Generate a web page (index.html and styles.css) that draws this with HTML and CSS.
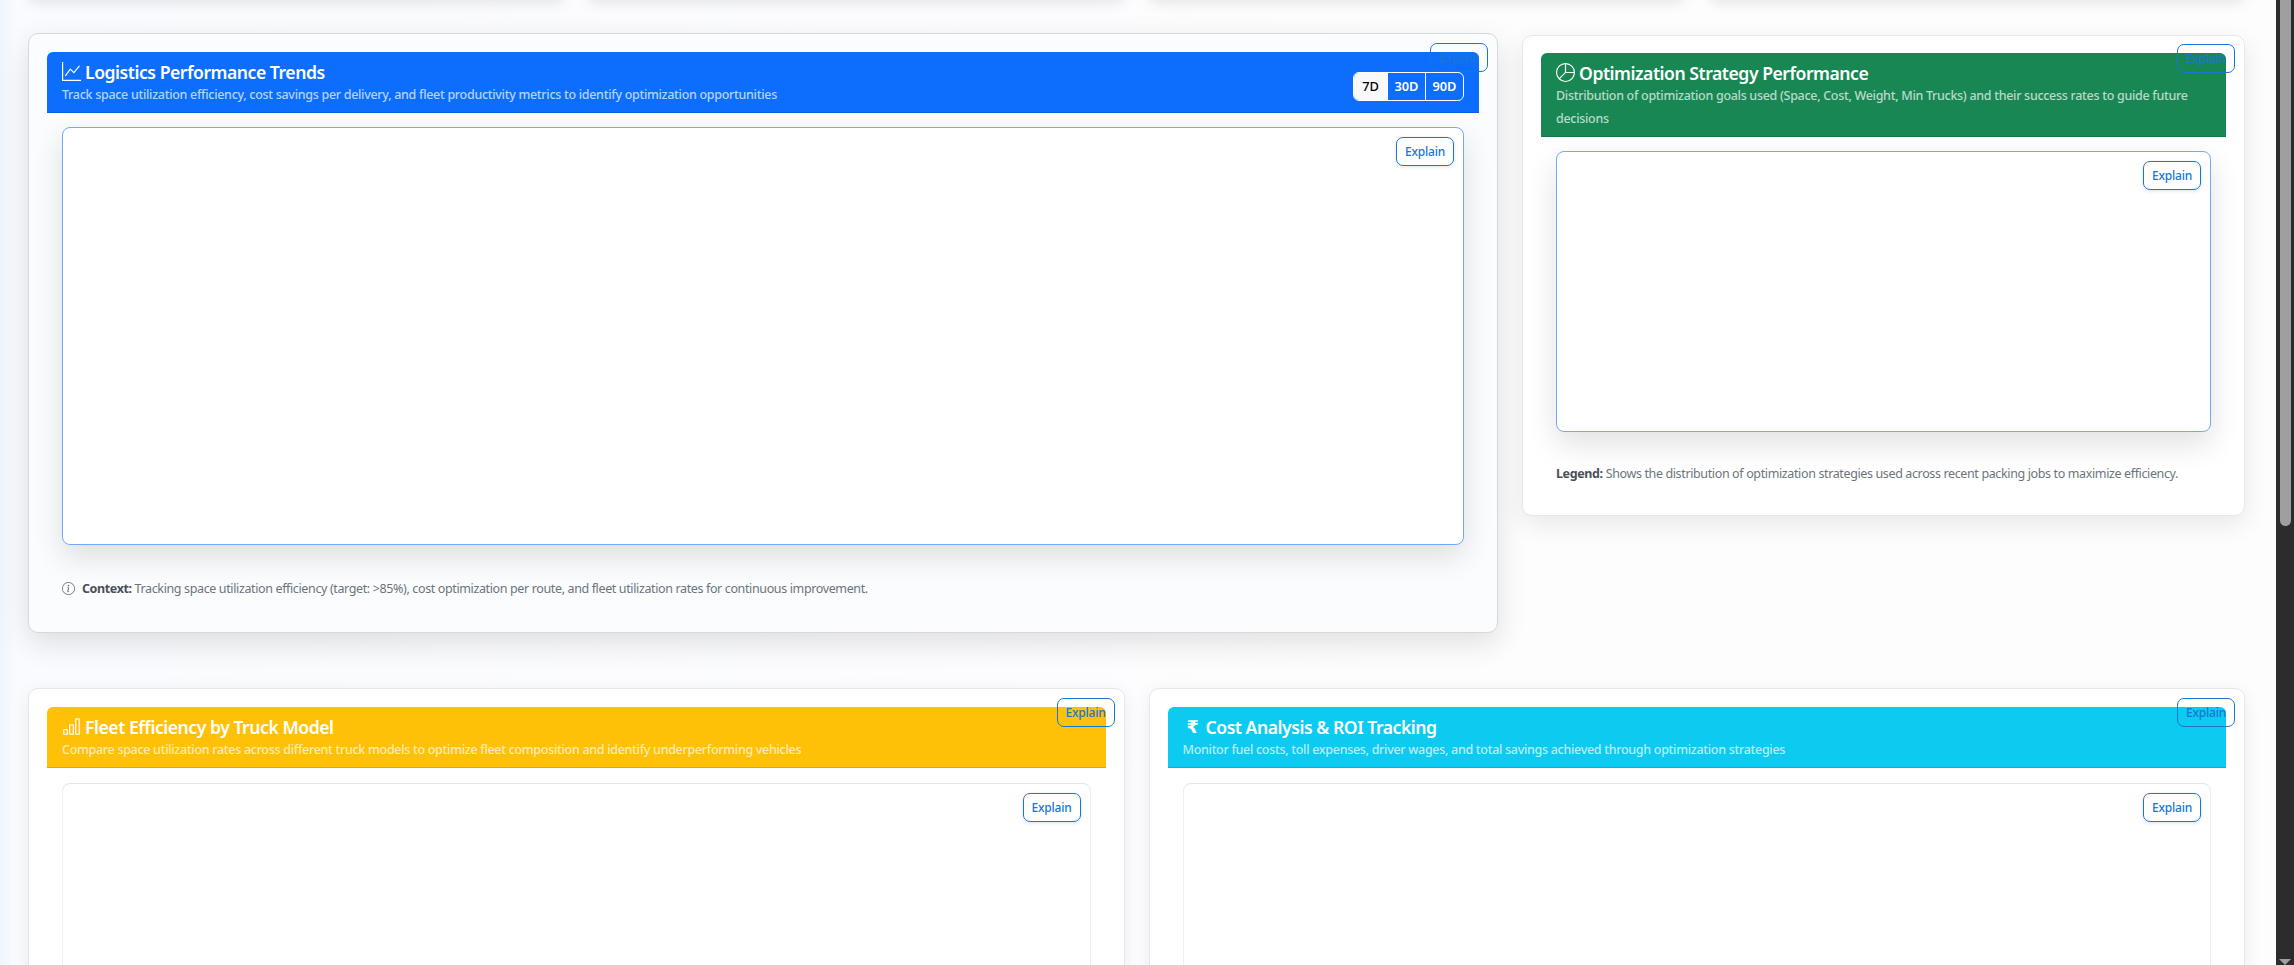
FILE: index.html
```html
<!DOCTYPE html>
<html lang="en">
<head>
    <meta charset="UTF-8">
    <meta name="viewport" content="width=device-width, initial-scale=1.0">
    <title>Logistics Dashboard</title>
    <link rel="stylesheet" href="styles.css">
</head>
<body>
<div class="page">
    <div class="row stats-row">
        <div class="col-3"><div class="stat-card"></div></div>
        <div class="col-3"><div class="stat-card"></div></div>
        <div class="col-3"><div class="stat-card"></div></div>
        <div class="col-3"><div class="stat-card"></div></div>
    </div>

    <div class="row first-row">
        <div class="col-8">
            <div class="card card-hover">
                <button class="explain">Explain</button>
                <div class="card-header header-primary header-split">
                    <div>
                        <h5 class="card-title">
                            <svg class="icon" viewBox="0 0 16 16"><path fill-rule="evenodd" d="M0 0h1v15h15v1H0V0Zm14.817 3.113a.5.5 0 0 1 .07.704l-4.5 5.5a.5.5 0 0 1-.74.037L7.06 6.767l-3.656 5.027a.5.5 0 0 1-.808-.588l4-5.5a.5.5 0 0 1 .758-.06l2.609 2.61 4.15-5.073a.5.5 0 0 1 .704-.07Z"/></svg>
                            Logistics Performance Trends
                        </h5>
                        <p class="card-sub">Track space utilization efficiency, cost savings per delivery, and fleet productivity metrics to identify optimization opportunities</p>
                    </div>
                    <div class="range-group">
                        <span class="range-btn active">7D</span>
                        <span class="range-btn">30D</span>
                        <span class="range-btn">90D</span>
                    </div>
                </div>
                <div class="card-body">
                    <div class="chart-box chart-active chart-trends">
                        <button class="explain explain-solid">Explain</button>
                    </div>
                    <p class="note note-context">
                        <svg class="note-icon" viewBox="0 0 16 16"><path d="M8 15A7 7 0 1 1 8 1a7 7 0 0 1 0 14zm0 1A8 8 0 1 0 8 0a8 8 0 0 0 0 16z"/><path d="m8.93 6.588-2.29.287-.082.38.45.083c.294.07.352.176.288.469l-.738 3.468c-.194.897.105 1.319.808 1.319.545 0 1.178-.252 1.465-.598l.088-.416c-.2.176-.492.246-.686.246-.275 0-.375-.193-.304-.533L8.93 6.588zM9 4.5a1 1 0 1 1-2 0 1 1 0 0 1 2 0z"/></svg>
                        <strong>Context:</strong> Tracking space utilization efficiency (target: &gt;85%), cost optimization per route, and fleet utilization rates for continuous improvement.
                    </p>
                </div>
            </div>
        </div>
        <div class="col-4">
            <div class="card card-strategy">
                <button class="explain">Explain</button>
                <div class="card-header header-success">
                    <h5 class="card-title">
                        <svg class="icon" viewBox="0 0 16 16"><path d="M7.5 1.018a7 7 0 0 0-4.79 11.566L7.5 7.793V1.018zm1 0V7.5h6.482A7.001 7.001 0 0 0 8.5 1.018zM14.982 8.5H8.207l-4.79 4.79A7 7 0 0 0 14.982 8.5zM0 8a8 8 0 1 1 16 0A8 8 0 0 1 0 8z"/></svg>
                        Optimization Strategy Performance
                    </h5>
                    <p class="card-sub">Distribution of optimization goals used (Space, Cost, Weight, Min Trucks) and their success rates to guide future decisions</p>
                </div>
                <div class="card-body">
                    <div class="chart-box chart-active chart-strategy">
                        <button class="explain explain-solid">Explain</button>
                    </div>
                    <p class="note note-legend"><strong>Legend:</strong> Shows the distribution of optimization strategies used across recent packing jobs to maximize efficiency.</p>
                </div>
            </div>
        </div>
    </div>

    <div class="row second-row">
        <div class="col-6">
            <div class="card card-low">
                <button class="explain">Explain</button>
                <div class="card-header header-warning">
                    <h5 class="card-title">
                        <svg class="icon" viewBox="0 0 16 16"><path d="M4 11H2v3h2v-3zm5-4H7v7h2V7zm5-5v12h-2V2h2zm-2-1a1 1 0 0 0-1 1v12a1 1 0 0 0 1 1h2a1 1 0 0 0 1-1V2a1 1 0 0 0-1-1h-2zM6 7a1 1 0 0 1 1-1h2a1 1 0 0 1 1 1v7a1 1 0 0 1-1 1H7a1 1 0 0 1-1-1V7zm-5 4a1 1 0 0 1 1-1h2a1 1 0 0 1 1 1v3a1 1 0 0 1-1 1H2a1 1 0 0 1-1-1v-3z"/></svg>
                        Fleet Efficiency by Truck Model
                    </h5>
                    <p class="card-sub">Compare space utilization rates across different truck models to optimize fleet composition and identify underperforming vehicles</p>
                </div>
                <div class="card-body">
                    <div class="chart-box chart-tall">
                        <button class="explain explain-solid">Explain</button>
                    </div>
                </div>
            </div>
        </div>
        <div class="col-6">
            <div class="card card-low">
                <button class="explain">Explain</button>
                <div class="card-header header-info">
                    <h5 class="card-title"><span class="rupee">₹</span> Cost Analysis &amp; ROI Tracking</h5>
                    <p class="card-sub">Monitor fuel costs, toll expenses, driver wages, and total savings achieved through optimization strategies</p>
                </div>
                <div class="card-body">
                    <div class="chart-box chart-tall">
                        <button class="explain explain-solid">Explain</button>
                    </div>
                </div>
            </div>
        </div>
    </div>
</div>

<div class="scrollbar">
    <div class="scroll-thumb"></div>
    <div class="scroll-arrow"></div>
</div>
</body>
</html>
```

FILE: styles.css
```css
* {
  box-sizing: border-box;
}

html,
body {
  margin: 0;
  height: 100%;
  overflow: hidden;
}

body {
  display: flex;
  font-family: "Noto Sans", "Open Sans", Arial, sans-serif;
  color: #212529;
  background-color: #fdfdfe;
}

.page {
  flex: 1;
  height: 100vh;
  overflow: hidden;
  padding: 0 31px 0 28px;
  background: linear-gradient(90deg, #eef5fe 0, #fafbfe 16px, #fdfdfe 60%);
}

.row {
  display: flex;
  margin: 0 -12px;
}

.col-3 {
  width: 25%;
  padding: 0 12px;
}

.col-4 {
  width: 33.3333%;
  padding: 0 12px;
}

.col-6 {
  width: 50%;
  padding: 0 12px;
}

.col-8 {
  width: 66.6667%;
  padding: 0 12px;
}

.stats-row {
  margin-top: -61px;
}

.stat-card {
  height: 60px;
  background-color: #fff;
  border-radius: 10px;
  box-shadow: 0 4px 14px rgba(0, 0, 0, 0.1);
}

.first-row {
  align-items: flex-start;
  margin-top: 36px;
}

.second-row {
  margin-top: 53px;
}

.card {
  position: relative;
  background-color: #fff;
  border: 1px solid #e6e8ee;
  border-radius: 10px;
  padding: 18px;
  box-shadow: 0 8px 26px rgba(0, 0, 0, 0.09);
}

.card-hover {
  top: -2px;
  background-color: #fbfcfe;
  border-color: #d5d8dd;
  box-shadow: 0 10px 30px rgba(0, 0, 0, 0.12);
}

.card-strategy {
  padding-top: 17px;
}

.card-strategy > .explain {
  top: 8px;
}

.card-low {
  box-shadow: 0 4px 18px rgba(0, 0, 0, 0.07);
}

.card-header {
  padding: 8px 15px 6px;
  border-radius: 6px 6px 0 0;
  border-bottom: 1px solid rgba(0, 0, 0, 0.13);
  color: #fff;
}

.header-split {
  display: flex;
  justify-content: space-between;
  align-items: center;
}

.header-primary {
  background-color: #0d6efd;
}

.header-success {
  background-color: #198754;
}

.header-warning {
  background-color: #ffc107;
}

.header-info {
  background-color: #0dcaf0;
}

.card-title {
  display: flex;
  align-items: center;
  gap: 4px;
  margin: 0;
  height: 23px;
  font-size: 17.6px;
  font-weight: 600;
  letter-spacing: -0.47px;
  white-space: nowrap;
}

.card-sub {
  margin: 0;
  font-size: 12.5px;
  line-height: 23px;
  font-weight: 500;
  letter-spacing: -0.3px;
  color: rgba(255, 255, 255, 0.7);
}

.icon {
  width: 19px;
  height: 19px;
  fill: currentColor;
  flex: none;
}

.rupee {
  width: 19px;
  padding-left: 4px;
  font-family: "DejaVu Sans", sans-serif;
}

.range-group {
  display: flex;
  margin-top: 6px;
  border: 1px solid #fff;
  border-radius: 6px;
  overflow: hidden;
}

.range-btn {
  padding: 0 6.5px;
  height: 27px;
  font-size: 12.8px;
  font-weight: 600;
  line-height: 27px;
  border-left: 1px solid #fff;
}

.range-btn:first-child {
  border-left: 0;
  padding: 0 8px;
}

.range-btn.active {
  background-color: #f8f9fa;
  color: #000;
  font-weight: 500;
}

.card-body {
  padding: 14px 15px 0;
}

.card-low .card-body {
  padding-top: 15px;
}

.chart-box {
  position: relative;
  background-color: #fff;
  border: 1px solid #e8eff8;
  border-top-color: #e4e6ea;
  border-radius: 8px;
}

.chart-active {
  border-color: #74a9f7;
  box-shadow: 0 12px 30px rgba(0, 0, 0, 0.12);
}

.chart-trends {
  height: 418px;
}

.chart-strategy {
  height: 281px;
}

.chart-tall {
  height: 400px;
}

.explain {
  position: absolute;
  top: 9px;
  right: 9px;
  width: 58px;
  height: 29px;
  padding: 0;
  font-family: inherit;
  font-size: 12px;
  font-weight: 500;
  letter-spacing: -0.2px;
  color: #1976d2;
  background: none;
  border: 1px solid #1976d2;
  border-radius: 7px;
}

.explain-solid {
  background-color: #fff;
  box-shadow: 0 1px 4px rgba(0, 0, 0, 0.12);
}

.note {
  margin: 0;
  font-size: 12.5px;
  line-height: 22px;
  letter-spacing: -0.37px;
  color: #6c757d;
}

.note strong {
  color: #495057;
}

.note-context {
  padding: 33px 0 14px;
}

.note-legend {
  padding: 31px 0 12px;
}

.note-icon {
  width: 13px;
  height: 13px;
  margin-right: 4px;
  vertical-align: -2px;
  fill: #6c757d;
}

.scrollbar {
  position: relative;
  flex: none;
  width: 18px;
  height: 100vh;
  background-color: #2c2c2c;
}

.scroll-thumb {
  width: 11px;
  height: 526px;
  margin-left: 4px;
  background-color: #9f9f9f;
  border-radius: 0 0 6px 6px;
}

.scroll-arrow {
  position: absolute;
  left: 3px;
  bottom: 0;
  width: 0;
  height: 0;
  border-left: 6px solid transparent;
  border-right: 6px solid transparent;
  border-top: 6px solid #9f9f9f;
}
```
